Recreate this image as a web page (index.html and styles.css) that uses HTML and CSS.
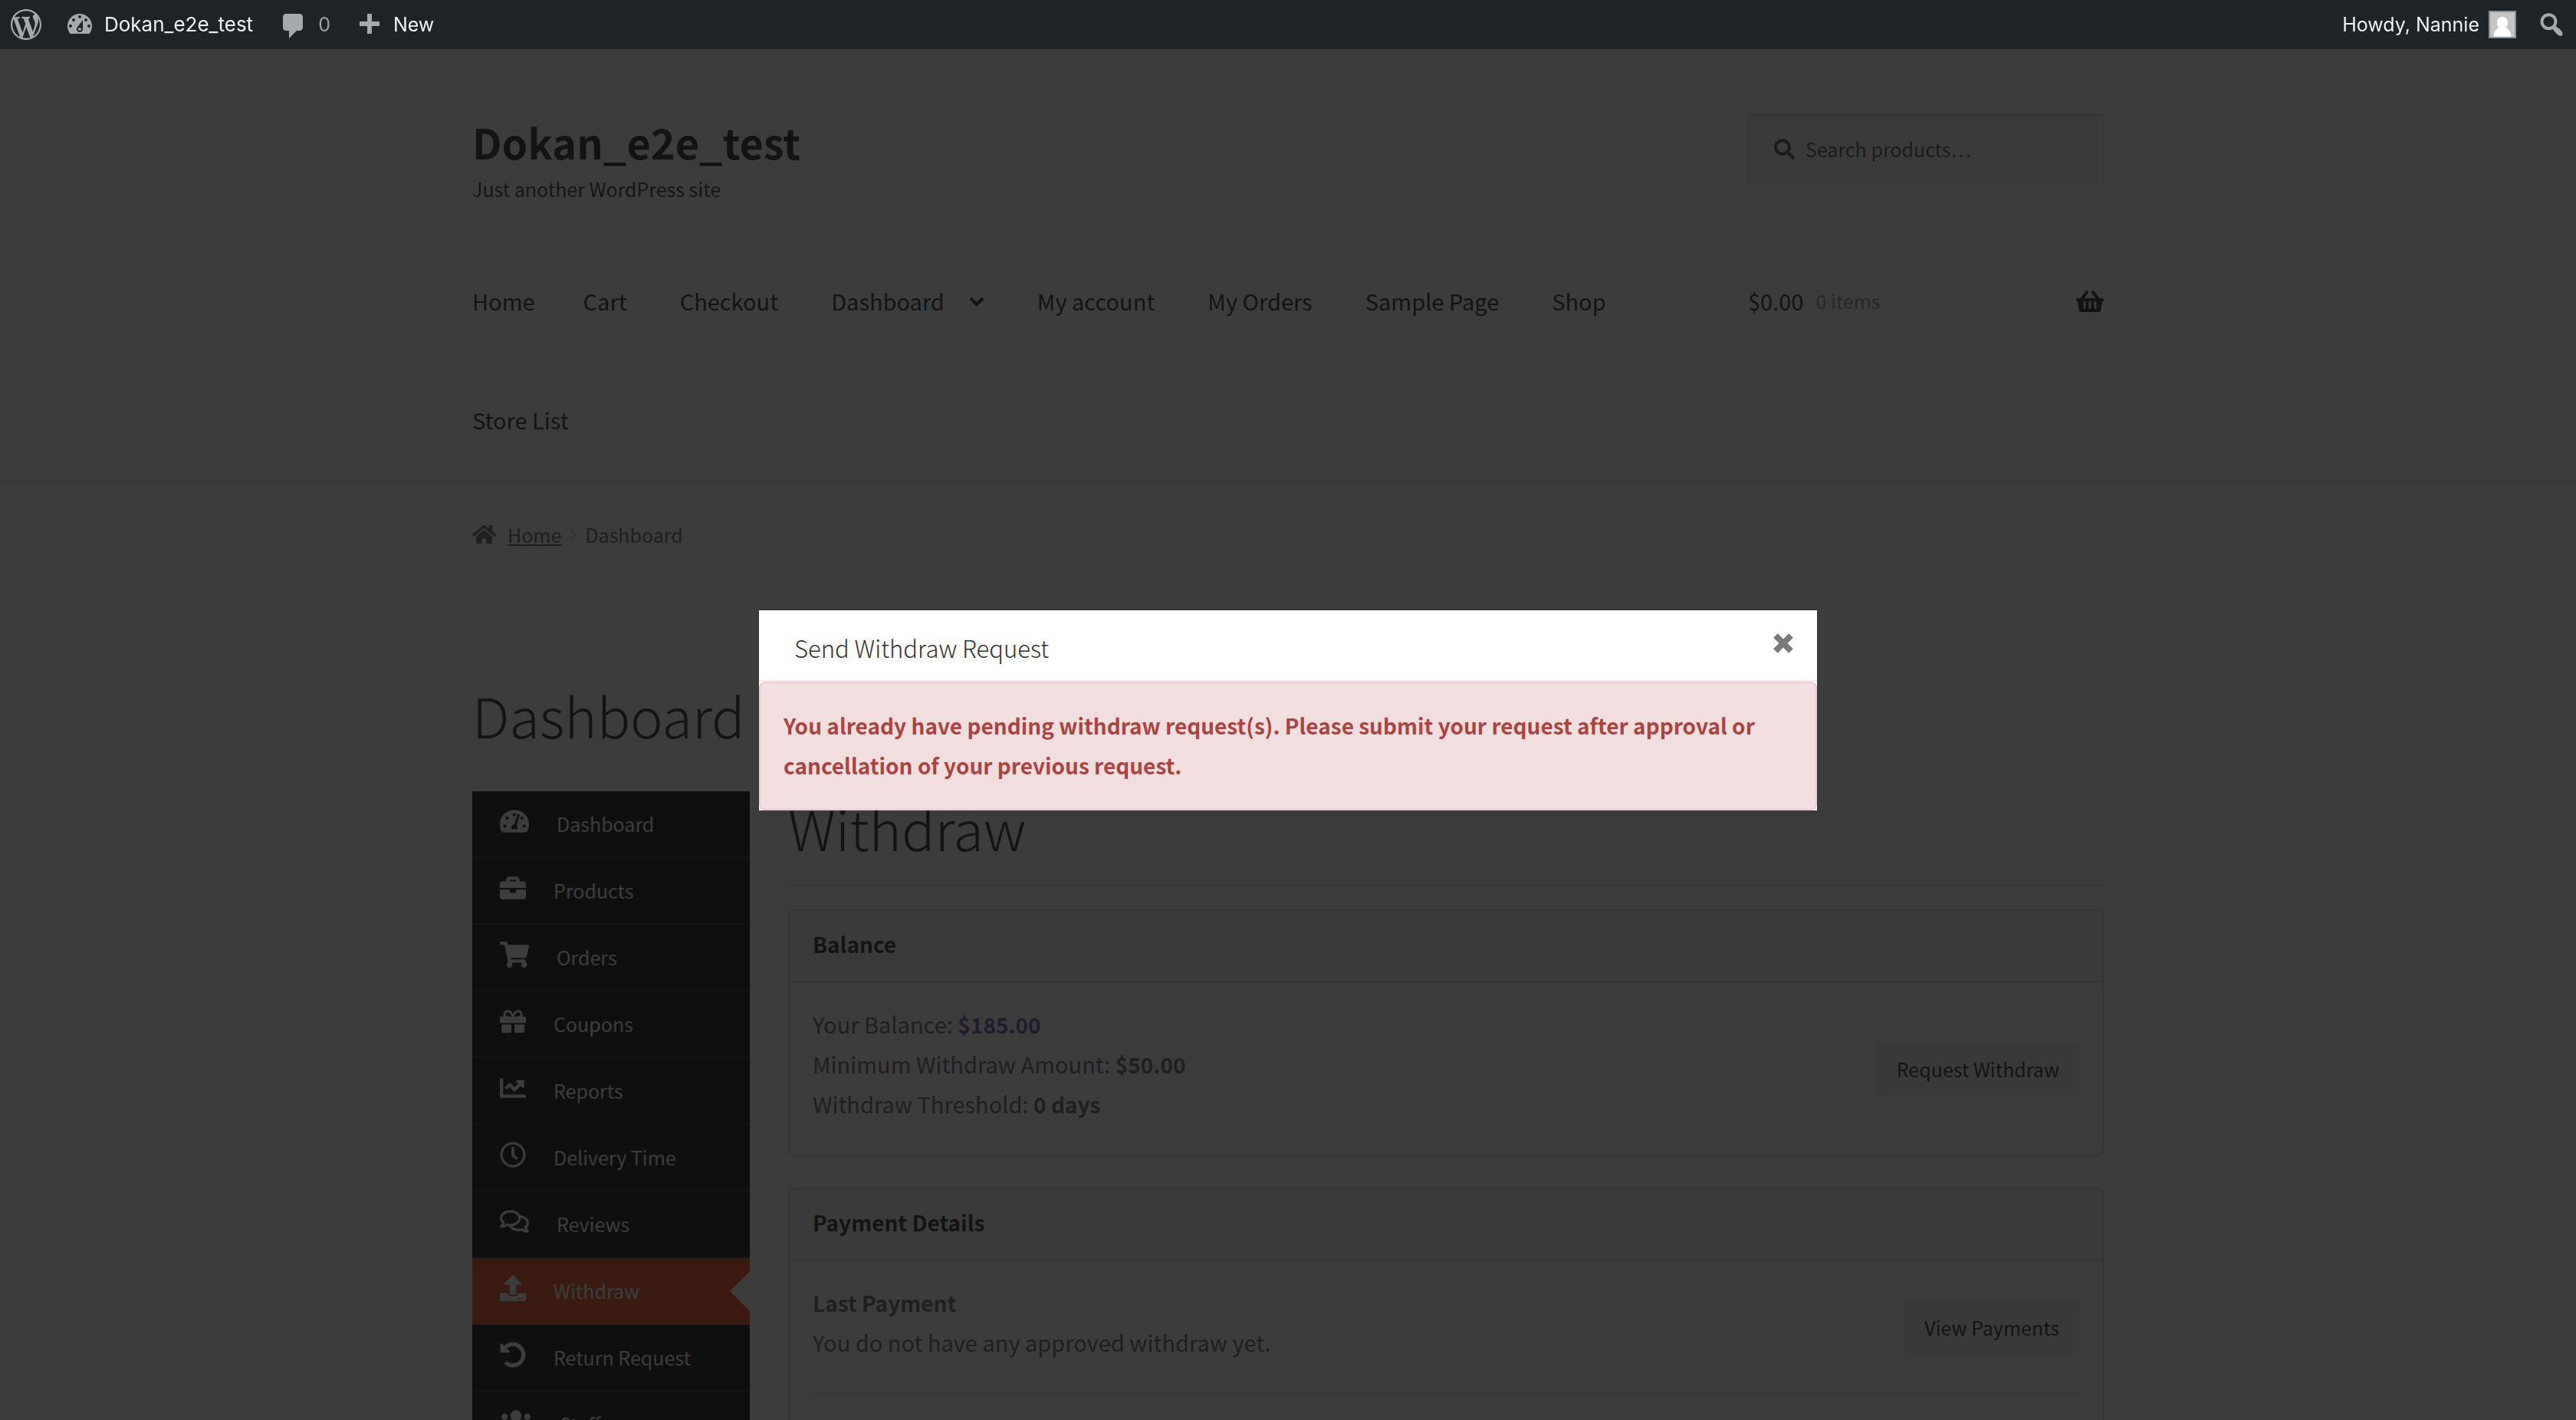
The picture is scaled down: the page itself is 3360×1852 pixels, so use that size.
FILE: index.html
```html
<!DOCTYPE html>
<html lang="en">
<head>
<meta charset="utf-8">
<title>Dashboard – Dokan_e2e_test</title>
<link rel="stylesheet" href="styles.css">
</head>
<body>
<nav class="adminbar" aria-label="Toolbar">
  <a class="ab-logo" href="#" aria-label="About WordPress"><svg viewBox="0 0 20 20"><path d="M20 10c0-5.51-4.49-10-10-10C4.48 0 0 4.49 0 10c0 5.52 4.48 10 10 10 5.51 0 10-4.48 10-10zM7.78 15.37L4.37 6.22c.55-.02 1.17-.08 1.17-.08.5-.06.44-1.13-.06-1.11 0 0-1.45.11-2.37.11-.18 0-.37 0-.58-.01C4.12 2.69 6.87 1.11 10 1.11c2.33 0 4.45.87 6.05 2.34-.68-.11-1.65.39-1.65 1.58 0 .74.45 1.36.9 2.1.35.61.55 1.36.55 2.46 0 1.49-1.4 5-1.4 5l-3.03-8.37c.54-.02.82-.17.82-.17.5-.05.44-1.25-.06-1.22 0 0-1.44.12-2.38.12-.87 0-2.33-.12-2.33-.12-.5-.03-.56 1.2-.06 1.22l.92.08 1.26 3.41zM17.41 10c.24-.64.74-1.87.43-4.25.7 1.29 1.05 2.71 1.05 4.25 0 3.29-1.73 6.24-4.4 7.78.97-2.59 1.94-5.2 2.92-7.78zM6.1 18.09C3.12 16.65 1.11 13.53 1.11 10c0-1.3.23-2.48.72-3.59C3.25 10.3 4.67 14.2 6.1 18.09zm4.03-6.63l2.58 6.98c-.86.29-1.76.45-2.71.45-.79 0-1.57-.11-2.29-.33.81-2.38 1.62-4.74 2.42-7.1z"/></svg></a>
  <a class="ab-site" href="#"><svg viewBox="0 0 20 20"><path d="M3.76 16h12.48c1.1-1.37 1.76-3.11 1.76-5 0-4.42-3.58-8-8-8s-8 3.58-8 8c0 1.89.66 3.63 1.76 5zM10 4c.55 0 1 .45 1 1s-.45 1-1 1-1-.45-1-1 .45-1 1-1zM6 6c.55 0 1 .45 1 1s-.45 1-1 1-1-.45-1-1 .45-1 1-1zm8 0c.55 0 1 .45 1 1s-.45 1-1 1-1-.45-1-1 .45-1 1-1zm-5.37 5.55L12 7v6c0 1.1-.9 2-2 2s-2-.9-2-2c0-.57.24-1.08.63-1.45zM4 10c.55 0 1 .45 1 1s-.45 1-1 1-1-.45-1-1 .45-1 1-1zm12 0c.55 0 1 .45 1 1s-.45 1-1 1-1-.45-1-1 .45-1 1-1zm-5 3c0-.55-.45-1-1-1s-1 .45-1 1 .45 1 1 1 1-.45 1-1z"/></svg>Dokan_e2e_test</a>
  <a class="ab-comments" href="#"><svg viewBox="0 0 20 20"><path d="M5 2h9c1.1 0 2 .9 2 2v7c0 1.1-.9 2-2 2h-2l-5 5v-5H5c-1.1 0-2-.9-2-2V4c0-1.1.9-2 2-2z"/></svg><span>0</span></a>
  <a class="ab-new" href="#"><svg viewBox="0 0 20 20"><path d="M17 7v3h-5v5H9v-5H4V7h5V2h3v5h5z"/></svg>New</a>
  <a class="ab-account" href="#">Howdy, Nannie<svg class="avatar" viewBox="0 0 36 36"><path fill="#8c8f94" d="M0 0h36v36H0z"/><path fill="#c5c5c5" d="M2 2h32v32H2z"/><path fill="#fff" d="M18 8c4.400 0 7 3.200 7 7.500 0 3-1.200 5.200-2.600 6.600C26.500 24 29 27.500 29.500 34h-23C7 27.500 9.500 24 13.600 22.100 12.200 20.700 11 18.500 11 15.500 11 11.200 13.600 8 18 8z"/></svg></a>
  <a class="ab-search" href="#" aria-label="Search"><svg viewBox="0 0 20 20"><path d="M12.140 4.180c1.870 1.870 2.110 4.750.72 6.890.12.1.22.21.36.31.2.16.47.36.81.59.34.24.56.39.66.47.42.31.73.57.94.78.32.32.6.65.84 1 .25.35.44.69.59 1.040.14.35.21.68.18 1-.02.32-.14.59-.36.81s-.49.34-.81.36c-.31.02-.65-.04-.99-.19-.35-.14-.7-.34-1.040-.59-.35-.24-.68-.52-1-.84-.21-.21-.47-.52-.77-.93-.1-.13-.25-.35-.47-.66-.22-.32-.4-.57-.56-.78-.16-.2-.29-.35-.44-.5-2.070 1.090-4.690.76-6.440-.98-2.140-2.150-2.140-5.640 0-7.780 2.150-2.150 5.630-2.150 7.780 0zm-1.410 6.360c1.360-1.370 1.360-3.580 0-4.950-1.370-1.370-3.590-1.370-4.950 0-1.370 1.370-1.370 3.580 0 4.950 1.360 1.370 3.580 1.370 4.950 0z"/></svg></a>
</nav>

<header class="site-header">
  <div class="container">
    <div class="header-top">
      <div class="branding">
        <a class="site-title" href="#">Dokan_e2e_test</a>
        <p class="tagline">Just another WordPress site</p>
      </div>
      <form class="search">
        <svg viewBox="0 0 512 512"><path d="M505 442.700L405.300 343c-4.500-4.500-10.600-7-17-7H372c27.600-35.300 44-79.700 44-128C416 93.100 322.900 0 208 0S0 93.100 0 208s93.100 208 208 208c48.300 0 92.700-16.400 128-44v16.300c0 6.400 2.500 12.500 7 17l99.700 99.700c9.400 9.400 24.600 9.400 33.900 0l28.300-28.300c9.400-9.400 9.400-24.600.1-34zM208 336c-70.700 0-128-57.200-128-128 0-70.700 57.200-128 128-128 70.700 0 128 57.200 128 128 0 70.700-57.200 128-128 128z"/></svg>
        <input type="search" aria-label="Search products" placeholder="Search products…">
      </form>
    </div>
    <div class="header-nav">
      <nav class="main-nav" aria-label="Primary">
        <a class="first" href="#">Home</a>
        <a href="#">Cart</a>
        <a href="#">Checkout</a>
        <a class="parent" href="#">Dashboard<svg viewBox="0 0 20 14"><path d="M2 3l8 8 8-8" fill="none" stroke="currentColor" stroke-width="4"/></svg></a>
        <a href="#">My account</a>
        <a href="#">My Orders</a>
        <a href="#">Sample Page</a>
        <a href="#">Shop</a>
        <a href="#">Store List</a>
      </nav>
      <a class="cart" href="#"><span>$0.00</span><small>0 items</small><svg viewBox="0 0 576 512"><path d="M576 216v16c0 13.255-10.745 24-24 24h-8l-26.113 182.788C514.509 462.435 494.257 480 470.370 480H105.630c-23.887 0-44.139-17.565-47.518-41.212L32 256h-8c-13.255 0-24-10.745-24-24v-16c0-13.255 10.745-24 24-24h67.341l106.780-146.821c10.395-14.292 30.407-17.453 44.701-7.058 14.293 10.395 17.453 30.408 7.058 44.701L170.477 192h235.046L326.120 82.821c-10.395-14.292-7.234-34.306 7.059-44.701 14.291-10.395 34.306-7.235 44.701 7.058L484.659 192H552c13.255 0 24 10.745 24 24zM312 392V280c0-13.255-10.745-24-24-24s-24 10.745-24 24v112c0 13.255 10.745 24 24 24s24-10.745 24-24zm112 0V280c0-13.255-10.745-24-24-24s-24 10.745-24 24v112c0 13.255 10.745 24 24 24s24-10.745 24-24zm-224 0V280c0-13.255-10.745-24-24-24s-24 10.745-24 24v112c0 13.255 10.745 24 24 24s24-10.745 24-24z"/></svg></a>
    </div>
  </div>
</header>

<main class="container">
  <nav class="breadcrumb" aria-label="Breadcrumb">
    <svg class="home" viewBox="0 0 576 512"><path d="M280.370 148.260L96 300.110V464a16 16 0 0 0 16 16l112.060-.29a16 16 0 0 0 15.920-16V368a16 16 0 0 1 16-16h64a16 16 0 0 1 16 16v95.640a16 16 0 0 0 16 16.050L464 480a16 16 0 0 0 16-16V300L295.670 148.260a12.190 12.190 0 0 0-15.300 0zM571.600 251.470L488 182.560V44.050a12 12 0 0 0-12-12h-56a12 12 0 0 0-12 12v72.610L318.470 43a48 48 0 0 0-61 0L4.340 251.470a12 12 0 0 0-1.600 16.900l25.500 31A12 12 0 0 0 45.150 301l235.220-193.740a12.190 12.190 0 0 1 15.300 0L530.900 301a12 12 0 0 0 16.900-1.600l25.500-31a12 12 0 0 0-1.700-16.930z"/></svg>
    <a href="#">Home</a>
    <svg class="sep" viewBox="0 0 8 16"><path d="M1 1l5 7-5 7" fill="none" stroke="currentColor" stroke-width="2"/></svg>
    <span>Dashboard</span>
  </nav>
  <h1 class="page-title">Dashboard</h1>
  <div class="dashboard">
    <nav class="side" aria-label="Vendor dashboard">
      <a href="#"><svg class="wide" viewBox="0 0 576 512"><path d="M288 32C128.940 32 0 160.940 0 320c0 52.800 14.250 102.260 39.060 144.800 5.610 9.620 16.300 15.200 27.440 15.200h443c11.140 0 21.830-5.580 27.440-15.200C561.750 422.260 576 372.800 576 320c0-159.060-128.940-288-288-288zm0 64c14.710 0 26.580 10.130 30.320 23.650-1.110 2.260-2.640 4.230-3.450 6.670l-9.220 27.670c-5.130 3.490-10.970 6.010-17.640 6.010-17.670 0-32-14.330-32-32S270.330 96 288 96zM96 384c-17.670 0-32-14.330-32-32s14.330-32 32-32 32 14.330 32 32-14.330 32-32 32zm48-160c-17.670 0-32-14.330-32-32s14.330-32 32-32 32 14.330 32 32-14.330 32-32 32zm246.770-72.410l-61.330 184C343.130 347.330 352 364.540 352 384c0 11.720-3.380 22.550-8.880 32H232.880c-5.500-9.450-8.880-20.280-8.880-32 0-33.940 26.500-61.430 59.900-63.590l61.340-184.010c4.170-12.560 17.730-19.450 30.360-15.170 12.570 4.190 19.350 17.790 15.170 30.360zm14.660 57.200l15.520-46.550c3.470-1.290 7.130-2.230 11.050-2.230 17.670 0 32 14.330 32 32s-14.330 32-32 32c-11.380-.01-20.890-6.280-26.570-15.220zM480 384c-17.670 0-32-14.330-32-32s14.330-32 32-32 32 14.330 32 32-14.330 32-32 32z"/></svg>Dashboard</a>
      <a href="#"><svg viewBox="0 0 512 512"><path d="M320 336c0 8.840-7.160 16-16 16h-96c-8.840 0-16-7.160-16-16v-48H0v144c0 25.600 22.400 48 48 48h416c25.600 0 48-22.400 48-48V288H320v48zm144-208h-80V80c0-25.600-22.400-48-48-48H176c-25.600 0-48 22.400-48 48v48H48c-25.600 0-48 22.400-48 48v80h512v-80c0-25.600-22.400-48-48-48zm-144 0H192V96h128v32z"/></svg>Products</a>
      <a href="#"><svg class="wide" viewBox="0 0 576 512"><path d="M528.120 301.319l47.273-208C578.806 78.301 567.391 64 551.990 64H159.208l-9.166-44.810C147.758 8.021 137.930 0 126.529 0H24C10.745 0 0 10.745 0 24v16c0 13.255 10.745 24 24 24h69.883l70.248 343.435C147.325 417.100 136 435.222 136 456c0 30.928 25.072 56 56 56s56-25.072 56-56c0-15.674-6.447-29.835-16.824-40h209.647C430.447 426.165 424 440.326 424 456c0 30.928 25.072 56 56 56s56-25.072 56-56c0-22.172-12.888-41.332-31.579-50.405l5.517-24.276c3.413-15.018-8.002-29.319-23.403-29.319H218.117l-6.545-32h293.145c11.206 0 20.920-7.754 23.403-18.681z"/></svg>Orders</a>
      <a href="#"><svg viewBox="0 0 512 512"><path d="M32 448c0 17.700 14.300 32 32 32h160V320H32v128zm256 32h160c17.700 0 32-14.300 32-32V320H288v160zm192-320h-42.100c6.200-12.100 10.100-25.500 10.100-40 0-48.500-39.500-88-88-88-41.600 0-68.500 21.300-103 68.300-34.500-47-61.400-68.300-103-68.300-48.500 0-88 39.500-88 88 0 14.500 3.800 27.900 10.100 40H32c-17.700 0-32 14.300-32 32v80c0 8.800 7.200 16 16 16h480c8.800 0 16-7.200 16-16v-80c0-17.700-14.300-32-32-32zm-326.100 0c-22.100 0-40-17.900-40-40s17.900-40 40-40c19.900 0 34.600 3.300 86.100 80h-86.100zm206.100 0h-86.100c51.400-76.500 65.700-80 86.100-80 22.100 0 40 17.900 40 40s-17.900 40-40 40z"/></svg>Coupons</a>
      <a href="#"><svg viewBox="0 0 512 512"><path d="M496 384H64V80c0-8.840-7.160-16-16-16H16C7.160 64 0 71.160 0 80v336c0 17.670 14.330 32 32 32h464c8.840 0 16-7.160 16-16v-32c0-8.840-7.160-16-16-16zM464 96H345.940c-21.380 0-32.090 25.850-16.970 40.970l32.400 32.400L288 242.750l-73.370-73.370c-12.500-12.500-32.760-12.500-45.250 0l-68.690 68.690c-6.250 6.250-6.250 16.380 0 22.630l22.620 22.620c6.250 6.250 16.380 6.250 22.630 0L192 237.250l73.370 73.370c12.500 12.500 32.760 12.500 45.250 0l96-96 32.400 32.400c15.120 15.120 40.970 4.410 40.970-16.970V112c.01-8.840-7.150-16-15.990-16z"/></svg>Reports</a>
      <a href="#"><svg viewBox="0 0 512 512"><path d="M256 8C119 8 8 119 8 256s111 248 248 248 248-111 248-248S393 8 256 8zm0 448c-110.500 0-200-89.500-200-200S145.500 56 256 56s200 89.500 200 200-89.500 200-200 200zm61.800-104.400l-84.900-61.700c-3.100-2.300-4.900-5.900-4.900-9.700V116c0-6.600 5.400-12 12-12h32c6.600 0 12 5.400 12 12v141.700l66.800 48.600c5.400 3.900 6.500 11.400 2.600 16.800L334.600 349c-3.900 5.300-11.400 6.500-16.800 2.600z"/></svg>Delivery Time</a>
      <a href="#"><svg class="wide" viewBox="0 0 576 512"><path d="M532 386.200c27.500-27.100 44-61.100 44-98.200 0-80-76.500-146.100-176.200-157.900C368.300 72.500 294.300 32 208 32 93.100 32 0 103.600 0 192c0 37 16.500 71 44 98.200-15.300 30.700-37.300 54.500-37.700 54.900-6.300 6.700-8.100 16.500-4.400 25 3.600 8.500 12 14 21.200 14 53.500 0 96.700-20.200 125.200-38.800 9.200 2.100 18.700 3.700 28.400 4.900C208.100 407.600 281.800 448 368 448c20.800 0 40.800-2.400 59.800-6.800C456.300 459.700 499.400 480 553 480c9.200 0 17.500-5.500 21.200-14 3.600-8.500 1.900-18.300-4.400-25-.4-.3-22.500-24.100-37.800-54.800zm-392.800-92.300L122.100 305c-14.100 9.100-28.500 16.300-43.100 21.400 2.700-4.700 5.400-9.700 8-14.800l15.500-31.100L77.700 256C64.200 242.600 48 220.700 48 192c0-60.700 73.300-112 160-112s160 51.300 160 112-73.300 112-160 112c-16.500 0-33-1.900-49-5.600l-19.800-4.500zM498.300 352l-24.700 24.400 15.500 31.100c2.600 5.100 5.300 10.100 8 14.800-14.600-5.100-29-12.300-43.100-21.400l-17.100-11.100-19.900 4.600c-16 3.700-32.500 5.600-49 5.600-54 0-102.200-20.100-131.300-49.700C338 339.500 416 272.900 416 192c0-3.400-.4-6.700-.7-10C479.700 196.500 528 238.800 528 288c0 28.700-16.200 50.600-29.700 64z"/></svg>Reviews</a>
      <a class="active" href="#" aria-current="page"><svg viewBox="0 0 512 512"><path d="M296 384h-80c-13.300 0-24-10.700-24-24V192h-87.700c-17.800 0-26.700-21.500-14.100-34.100L242.300 5.700c7.500-7.500 19.800-7.500 27.300 0l152.200 152.200c12.600 12.600 3.700 34.100-14.100 34.100H320v168c0 13.300-10.700 24-24 24zm216-8v112c0 13.300-10.700 24-24 24H24c-13.300 0-24-10.700-24-24V376c0-13.300 10.700-24 24-24h136v8c0 30.900 25.100 56 56 56h80c30.900 0 56-25.100 56-56v-8h136c13.300 0 24 10.700 24 24zm-124 88c0-11-9-20-20-20s-20 9-20 20 9 20 20 20 20-9 20-20zm64 0c0-11-9-20-20-20s-20 9-20 20 9 20 20 20 20-9 20-20z"/></svg>Withdraw</a>
      <a href="#"><svg viewBox="0 0 512 512"><path d="M255.545 8c-66.269.119-126.438 26.233-170.860 68.685L48.971 40.971C33.851 25.851 8 36.559 8 57.941V192c0 13.255 10.745 24 24 24h134.059c21.382 0 32.090-25.851 16.971-40.971l-41.750-41.750c30.864-28.899 70.801-44.907 113.230-45.273 92.398-.798 170.283 73.977 169.484 169.442C423.236 348.009 349.816 424 256 424c-41.127 0-79.997-14.678-110.630-41.556-4.743-4.161-11.906-3.908-16.368.553L89.340 422.659c-4.872 4.872-4.631 12.815.482 17.433C133.798 479.813 192.074 504 256 504c136.966 0 247.999-111.033 248-247.998C504.001 119.193 392.354 7.755 255.545 8z"/></svg>Return Request</a>
      <a href="#"><svg class="wider" viewBox="0 0 640 512"><path d="M96 224c35.300 0 64-28.700 64-64s-28.700-64-64-64-64 28.700-64 64 28.700 64 64 64zm448 0c35.300 0 64-28.700 64-64s-28.700-64-64-64-64 28.700-64 64 28.700 64 64 64zm32 32h-64c-17.600 0-33.500 7.100-45.100 18.600 40.300 22.100 68.900 62 75.100 109.400h66c17.700 0 32-14.300 32-32v-32c0-35.300-28.700-64-64-64zm-256 0c61.900 0 112-50.100 112-112S381.900 32 320 32 208 82.100 208 144s50.100 112 112 112zm76.800 32h-8.300c-20.800 10-43.900 16-68.500 16s-47.600-6-68.500-16h-8.300C179.600 288 128 339.600 128 403.200V432c0 26.500 21.500 48 48 48h288c26.500 0 48-21.500 48-48v-28.800c0-63.600-51.600-115.200-115.200-115.200zm-223.700-13.400C161.500 263.100 145.600 256 128 256H64c-35.300 0-64 28.700-64 64v32c0 17.700 14.300 32 32 32h65.900c6.300-47.400 34.900-87.300 75.200-109.400z"/></svg>Staff</a>
    </nav>
    <section class="content">
      <h2 class="section-title">Withdraw</h2>
      <article class="panel">
        <h3>Balance</h3>
        <div class="panel-body">
          <div class="row">
            <div class="lines">
              <p>Your Balance: <a href="#">$185.00</a></p>
              <p>Minimum Withdraw Amount: <strong>$50.00</strong></p>
              <p>Withdraw Threshold: <strong>0 days</strong></p>
            </div>
            <button type="button">Request Withdraw</button>
          </div>
        </div>
      </article>
      <article class="panel">
        <h3>Payment Details</h3>
        <div class="panel-body">
          <div class="row">
            <div class="lines">
              <p><strong>Last Payment</strong></p>
              <p>You do not have any approved withdraw yet.</p>
            </div>
            <button type="button">View Payments</button>
          </div>
          <hr>
        </div>
      </article>
    </section>
  </div>
</main>

<div class="overlay">
  <div class="modal" role="dialog" aria-modal="true" aria-labelledby="modal-title">
    <header class="modal-head">
      <h2 id="modal-title">Send Withdraw Request</h2>
      <button class="close" type="button" aria-label="Close"><svg viewBox="0 0 28 28"><path d="M4 4l20 20M24 4L4 24" fill="none" stroke="currentColor" stroke-width="8"/></svg></button>
    </header>
    <div class="alert" role="alert"><strong>You already have pending withdraw request(s). Please submit your request after approval or cancellation of your previous request.</strong></div>
  </div>
</div>
</body>
</html>
```
FILE: styles.css
```css
* { box-sizing: border-box; }

html, body { height: 100%; overflow: hidden; }

body {
  margin: 0;
  background: #fff;
  color: #6d6d6d;
  font-family: "Noto Sans CJK SC", "Open Sans", sans-serif;
  font-size: 29px;
  line-height: 52px;
}

h1, h2, h3, p { margin: 0; }
a { color: inherit; text-decoration: none; }
svg { display: block; flex: none; fill: currentColor; }
strong { font-size: 28px; line-height: 40px; }

.container {
  width: 100%;
  max-width: 2128px;
  margin: 0 auto;
}

/* Toolbar */
.adminbar {
  position: relative;
  z-index: 20;
  display: flex;
  align-items: center;
  height: 64px;
  padding: 0 12px 0 14px;
  background: #1d2327;
  color: #f0f0f1;
  font: 25px/66px Inter, sans-serif;
}
.adminbar a { display: flex; align-items: center; }
.adminbar svg { width: 40px; height: 40px; color: #a7aaad; }
.ab-site { margin-left: 30px; gap: 12px; font-size: 26px; }
.ab-comments { margin-left: 33px; gap: 12px; }
.ab-comments span { color: #9ca1a7; }
.ab-comments svg, .ab-new svg { margin-top: 4px; }
.ab-new { margin-left: 30px; gap: 12px; }
.ab-account { margin-left: auto; gap: 12px; }
.adminbar .avatar { width: 36px; height: 36px; }
.ab-search { margin-left: 26px; }

/* Site header */
.site-header { padding: 84px 0 2px; border-bottom: 2px solid #eaeaea; }
.header-top { display: flex; justify-content: space-between; align-items: flex-start; }
.site-title {
  display: block;
  color: #333;
  font-size: 54px;
  font-weight: 700;
  line-height: 74px;
}
.tagline { color: #404040; font-size: 25px; line-height: 48px; }
.search {
  display: flex;
  align-items: center;
  gap: 14px;
  width: 464px;
  height: 92px;
  padding: 0 34px;
  background: #f2f2f2;
  box-shadow: inset 0 2px 2px rgba(0, 0, 0, .12);
}
.search svg { width: 27px; height: 27px; color: #5a5a5a; }
.search input {
  flex: 1;
  min-width: 0;
  padding: 0;
  border: 0;
  background: none;
  font: inherit;
  font-size: 25px;
}
.search input::placeholder { color: #616161; opacity: 1; }
.header-nav {
  display: flex;
  justify-content: space-between;
  margin-top: 45px;
  color: #333;
  line-height: 155px;
}
.main-nav {
  display: flex;
  flex: 1;
  flex-wrap: wrap;
  column-gap: 69px;
  padding-right: 72px;
}
.main-nav .first { margin-right: -6px; }
.main-nav .parent { display: flex; align-items: center; gap: 32px; }
.main-nav .parent svg { width: 20px; height: 14px; }
.cart { display: flex; align-items: center; width: 464px; height: 155px; }
.cart small { margin-left: 16px; font-size: 25px; opacity: .5; }
.cart svg { width: 36px; height: 32px; margin-left: auto; }

/* Breadcrumb and page title */
.breadcrumb {
  display: flex;
  align-items: center;
  margin-top: 46px;
  font-size: 25px;
  line-height: 44px;
}
.breadcrumb a { margin: 0 12px 0 15px; text-decoration: underline; }
.breadcrumb .home { width: 31px; height: 28px; }
.breadcrumb .sep { width: 8px; height: 16px; margin-right: 11px; opacity: .4; }
.page-title, .section-title {
  color: #333;
  font-size: 72px;
  font-weight: 300;
  line-height: 90px;
}
.page-title { margin: 168px 0 55px; }

/* Vendor dashboard */
.dashboard { display: grid; grid-template-columns: 362px 1fr; column-gap: 50px; }
.side { background: #222; color: #fff; font-size: 25px; }
.side a {
  position: relative;
  display: flex;
  align-items: center;
  gap: 36px;
  height: 87px;
  padding: 0 36px 2px;
  border-bottom: 2px solid #383838;
}
.side svg { width: 34px; height: 34px; margin-bottom: 6px; }
.side .wide { width: 38px; }
.side .wider { width: 42px; }
.side .active { background: #f05025; border-color: #f05025; }
.side .active::after {
  content: "";
  position: absolute;
  right: 0;
  top: 17px;
  border: 26px solid transparent;
  border-right-color: #fff;
  border-left: 0;
}
.section-title { padding: 2px 0 30px; border-bottom: 2px solid #eaeaea; }
.panel {
  margin-top: 30px;
  border: 2px solid #ddd;
  border-radius: 8px;
}
.panel + .panel { margin-top: 41px; }
.panel h3 {
  padding: 17px 30px 23px;
  border-bottom: 2px solid #ddd;
  border-radius: 6px 6px 0 0;
  background: #f5f5f5;
  color: #333;
  font-size: 28px;
  font-weight: 700;
}
.panel-body { padding: 27px 30px 28px; }
.row { display: flex; align-items: center; justify-content: space-between; }
.lines { padding-bottom: 13px; }
.lines a { color: #7f54b3; font-size: 28px; font-weight: 700; line-height: 40px; }
.row button {
  height: 69px;
  padding: 0 26px;
  border: 0;
  border-radius: 6px;
  background: #eee;
  color: #333;
  font: inherit;
  font-size: 25px;
}
hr { margin: 27px 0; border: 0; border-top: 2px solid #eaeaea; }

/* Modal */
.overlay {
  position: fixed;
  inset: 0;
  z-index: 10;
  display: grid;
  place-items: center;
  background: rgba(11, 11, 11, .8);
}
.modal { width: 1380px; background: #fff; }
.modal-head {
  display: flex;
  align-items: flex-start;
  justify-content: space-between;
  padding: 21px 30px 16px 46px;
  border-bottom: 2px solid #f3eaea;
}
.modal-head h2 { padding-top: 2px; color: #333; font-size: 31px; font-weight: 300; }
.close { margin-top: 8px; padding: 0; border: 0; background: none; color: #7a7a7a; }
.close svg { width: 28px; height: 28px; }
.alert {
  padding: 28px 30px 32px;
  border: 2px solid #ebccd1;
  border-radius: 8px;
  background: #f2dede;
  color: #a94442;
}
```
